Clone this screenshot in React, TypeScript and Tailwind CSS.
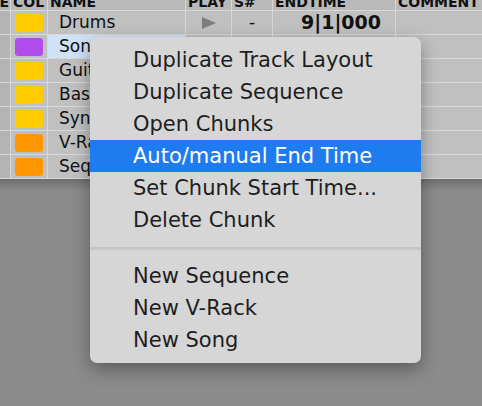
import React from 'react';

const rows = [
  { name: 'Drums', color: '#ffcc00', play: true, sn: '-', end: '9|1|000' },
  { name: 'Song', color: '#b04cec', selected: true },
  { name: 'Guitar', color: '#ffcc00' },
  { name: 'Bass', color: '#ffcc00' },
  { name: 'Synth', color: '#ffcc00' },
  { name: 'V-Rack', color: '#ff9500' },
  { name: 'Sequence', color: '#ff9500' },
];

const headers = ['E', 'COL', 'NAME', 'PLAY', 'S#', 'ENDTIME', 'COMMENT'];

type Item = { label: string; active?: boolean } | 'sep';

const menu: Item[] = [
  { label: 'Duplicate Track Layout' },
  { label: 'Duplicate Sequence' },
  { label: 'Open Chunks' },
  { label: 'Auto/manual End Time', active: true },
  { label: 'Set Chunk Start Time...' },
  { label: 'Delete Chunk' },
  'sep',
  { label: 'New Sequence' },
  { label: 'New V-Rack' },
  { label: 'New Song' },
];

function ContextMenu() {
  return (
    <div className="absolute left-[90px] top-[37px] w-[331px] rounded-[7px] bg-[#d6d6d6] py-[7px] shadow-[0_6px_18px_rgba(0,0,0,0.35)] font-['DejaVu_Sans',sans-serif] text-[21px]">
      {menu.map((item, i) =>
        item === 'sep' ? (
          <div key={i} className="h-6 flex items-center">
            <div className="h-[3px] w-full bg-[#c6c6c6]" />
          </div>
        ) : (
          <div
            key={i}
            className={`h-8 flex items-center pl-[43px] leading-none ${item.active ? 'bg-[#1f7cf0] text-white' : 'text-[#1e1e1e]'}`}
          >
            {item.label}
          </div>
        )
      )}
    </div>
  );
}

export default function App() {
  return (
    <div className="relative w-[482px] h-[406px] overflow-hidden bg-[#8b8b8b] font-['DejaVu_Sans',sans-serif]">
      {/* Track table */}
      <div className="grid grid-cols-[10px_36px_137px_45px_40px_122px_86px] grid-rows-[10px_repeat(7,23px)] gap-px bg-[#d8d8d8] pb-px">
        {headers.map((h, i) => (
          <div
            key={h}
            className={`relative overflow-hidden text-[14px] font-bold text-[#111] leading-none ${i === 0 ? 'bg-[#b4b4b4]' : 'bg-[#b9b9b9]'}`}
          >
            <span className={`absolute bottom-[1px] ${i === 0 ? 'right-[1px]' : 'left-[2px]'}`}>{h}</span>
          </div>
        ))}
        {rows.map((r) => (
          <React.Fragment key={r.name}>
            <div className="bg-[#b4b4b4]" />
            <div className="bg-[#c0c0c0] flex items-center justify-center">
              <div className="w-7 h-[18px] rounded-[3px]" style={{ backgroundColor: r.color }} />
            </div>
            <div
              className={`flex items-center pl-[11px] text-[17px] text-[#111] ${r.selected ? 'bg-[#cfe2f7]' : 'bg-[#c0c0c0]'}`}
            >
              {r.name}
            </div>
            <div className="bg-[#c0c0c0] flex items-center justify-center">
              {r.play && (
                <svg width="14" height="12" viewBox="0 0 14 12">
                  <polygon points="0,0 14,6 0,12" fill="#7e7e7e" />
                </svg>
              )}
            </div>
            <div className="bg-[#c0c0c0] flex items-center justify-center text-[17px] text-[#111]">
              {r.sn}
            </div>
            <div className="bg-[#c0c0c0] flex items-center justify-end pr-[14px] text-[19px] font-bold text-[#111]">
              {r.end}
            </div>
            <div className="bg-[#c0c0c0]" />
          </React.Fragment>
        ))}
      </div>
      <div className="h-3 bg-gradient-to-b from-[#6e6e6e] to-[#8b8b8b]" />

      <ContextMenu />
    </div>
  );
}
